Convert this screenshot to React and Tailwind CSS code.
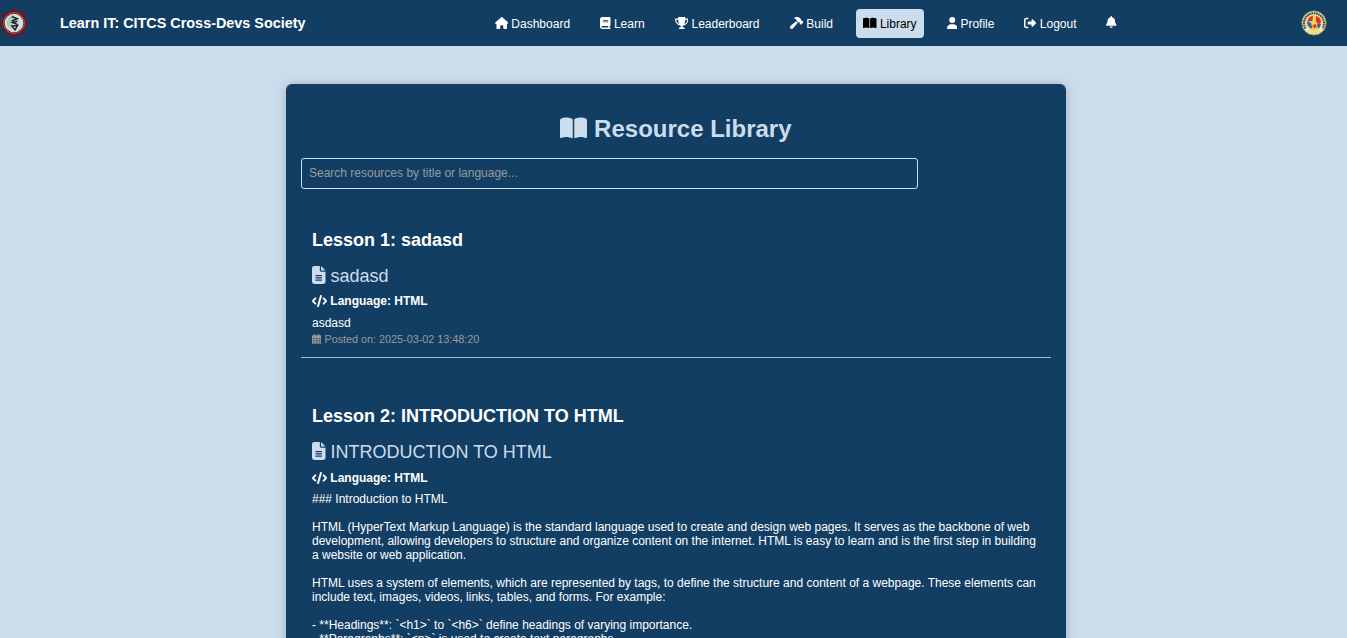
import React from "react";
import {
  FaHouse, FaBook, FaTrophy, FaHammer, FaBookOpen, FaUser,
  FaRightFromBracket, FaBell, FaFileLines, FaCode, FaRegCalendarDays,
} from "react-icons/fa6";

const TEETH = [0, 45, 90, 135, 180, 225, 270, 315];

function GearLogo() {
  return (
    <svg viewBox="0 0 28 28" className="block h-7 w-7">
      {TEETH.map((a) => (
        <rect key={a} x="11" y="0" width="6" height="5" rx="0.8" fill="#6e1820" transform={`rotate(${a} 14 14)`} />
      ))}
      <circle cx="14" cy="14" r="12" fill="#6e1820" />
      <circle cx="14" cy="14" r="10.3" fill="none" stroke="#b58d92" strokeWidth="1" strokeDasharray="1.5 .8" />
      <circle cx="14" cy="14" r="9.300" fill="#d9dddd" />
      <path d="M6.500 14a8 8 0 0 1 7-7.500v7l-2 6.500a8 8 0 0 1-5-6z" fill="#a8ccba" />
      <path d="M11.800 7.500l5.500 2.200-5.500 2.300M17.500 12.200l-5 1.300 5 2M12 17l5.600-.6-2.600 4.500z" fill="none" stroke="#1f2628" strokeWidth="1.500" />
    </svg>
  );
}

function SealAvatar() {
  return (
    <svg viewBox="0 0 26 26" className="block h-[26px] w-[26px]">
      <circle cx="13" cy="13" r="12.100" fill="#f3f1dc" stroke="#8d9a3e" strokeWidth="1" />
      <path d="M4.500 18.500a10 10 0 1 1 17 0" fill="none" stroke="#4b4f48" strokeWidth="2.200" strokeDasharray="1.8 .5" />
      <circle cx="13" cy="13" r="8" fill="#f0cf58" />
      <path d="M7.500 8.500q2-2.500 4.500-2.700l-.5 5.200-5 .5zM15 6q4 1 5 5l-1 3-4-1.500zM11 15l3.500-1 1.500 3-3 1z" fill="#dd3038" />
      <path d="M6 11.500l4 1.500 1.500 5.500q-4.500-.5-5.500-6zM16 13.500l4 .5q-.5 3-3 4.500z" fill="#2466b8" />
      <path d="M13 5.500l1.200 5.500 2.300 2.500-3 .5-2.500 2 .5-4z" fill="#f5d93c" />
      <path d="M5.500 19.500q7.500 4 15 0l-1.500 2.500q-6 3.500-12 0z" fill="#e9dc72" />
    </svg>
  );
}

const WIDE = "w-[1.125em]";
const NARROW = "w-[0.875em]";

const NAV = [
  { icon: FaHouse, size: WIDE, label: "Dashboard" },
  { icon: FaBook, size: NARROW, label: "Learn" },
  { icon: FaTrophy, size: WIDE, label: "Leaderboard" },
  { icon: FaHammer, size: WIDE, label: "Build" },
  { icon: FaBookOpen, size: WIDE, label: "Library", active: true },
  { icon: FaUser, size: NARROW, label: "Profile" },
  { icon: FaRightFromBracket, size: "w-[1em]", label: "Logout" },
];

function Icon({ as: Glyph, size }) {
  return <Glyph className={"inline-block h-[1em] align-[-0.125em] " + size} />;
}

function Header() {
  return (
    <header className="flex h-[46px] items-center bg-[#133e64] pr-5 text-white">
      <GearLogo />
      <div className="ml-8 w-[427px] whitespace-nowrap pt-[2px] text-[14.4px] font-bold">
        Learn IT: CITCS Cross-Devs Society
      </div>
      <nav className="flex items-center gap-[15px]">
        {NAV.map(({ icon, size, label, active }) => (
          <a
            key={label}
            className={
              "h-[29px] whitespace-nowrap rounded-[4px] px-[7.5px] pt-px text-[12px] leading-[28px] " +
              (active ? "bg-[#cbdcec] text-black" : "text-white")
            }
          >
            <Icon as={icon} size={size} /> {label}
          </a>
        ))}
        <a className="h-[29px] px-[7.5px] text-[12px] leading-[28px]"><Icon as={FaBell} size={NARROW} /></a>
      </nav>
      <div className="ml-auto"><SealAvatar /></div>
    </header>
  );
}

function Lesson({ heading, title, children, posted, languageGap = "mt-[7px] mb-2" }) {
  return (
    <section className="px-[11px] text-[12px] text-white">
      <h2 className="text-[18px] font-bold leading-[22px]">{heading}</h2>
      <h3 className="mt-[14px] text-[18px] leading-[22px] text-[#cbdcec]"><Icon as={FaFileLines} size="w-[0.75em]" /> {title}</h3>
      <p className={"font-bold leading-[14px] " + languageGap}><Icon as={FaCode} size="w-[1.25em] stroke-white stroke-[18px]" /> Language: HTML</p>
      <div className="whitespace-pre leading-[14px]">{children}</div>
      {posted && (
        <p className="mt-[3px] text-[10.8px] leading-[13px] text-[#999]"><Icon as={FaRegCalendarDays} size="w-[0.875em] stroke-[#999] stroke-[14px]" /> Posted on: {posted}</p>
      )}
    </section>
  );
}

const BODY = `### Introduction to HTML

HTML (HyperText Markup Language) is the standard language used to create and design web pages. It serves as the backbone of web
development, allowing developers to structure and organize content on the internet. HTML is easy to learn and is the first step in building
a website or web application.

HTML uses a system of elements, which are represented by tags, to define the structure and content of a webpage. These elements can
include text, images, videos, links, tables, and forms. For example:

- **Headings**: \`<h1>\` to \`<h6>\` define headings of varying importance.
- **Paragraphs**: \`<p>\` is used to create text paragraphs.`;

export default function App() {
  return (
    <div className="h-[638px] overflow-hidden bg-[#cbdcec] font-['Liberation_Sans',Arial,sans-serif]">
      <Header />
      <main className="ml-[286px] mt-[38px] h-[700px] w-[780px] rounded-[6px] bg-[#133e64] px-[15px] pt-[30px] shadow-[0_0_10px_rgba(0,0,0,0.2)]">
        <h1 className="text-center text-[24px] font-bold leading-[29px] text-[#cbdcec]">
          <Icon as={FaBookOpen} size={WIDE} /> Resource Library
        </h1>
        <input
          className="mt-[15px] block h-[31px] w-[617px] rounded-[3px] border border-[#cbdcec] bg-transparent px-[7px] pb-[2px] text-[12px] placeholder:text-[#999]"
          placeholder="Search resources by title or language..."
        />
        <div className="mt-10 h-[128px]">
          <Lesson heading="Lesson 1: sadasd" title="sadasd" posted="2025-03-02 13:48:20">asdasd</Lesson>
        </div>
        <div className="border-t border-[#9fbbd8] pt-[47px]">
          <Lesson heading="Lesson 2: INTRODUCTION TO HTML" title="INTRODUCTION TO HTML" languageGap="mt-2 mb-[7px]">{BODY}</Lesson>
        </div>
      </main>
    </div>
  );
}
